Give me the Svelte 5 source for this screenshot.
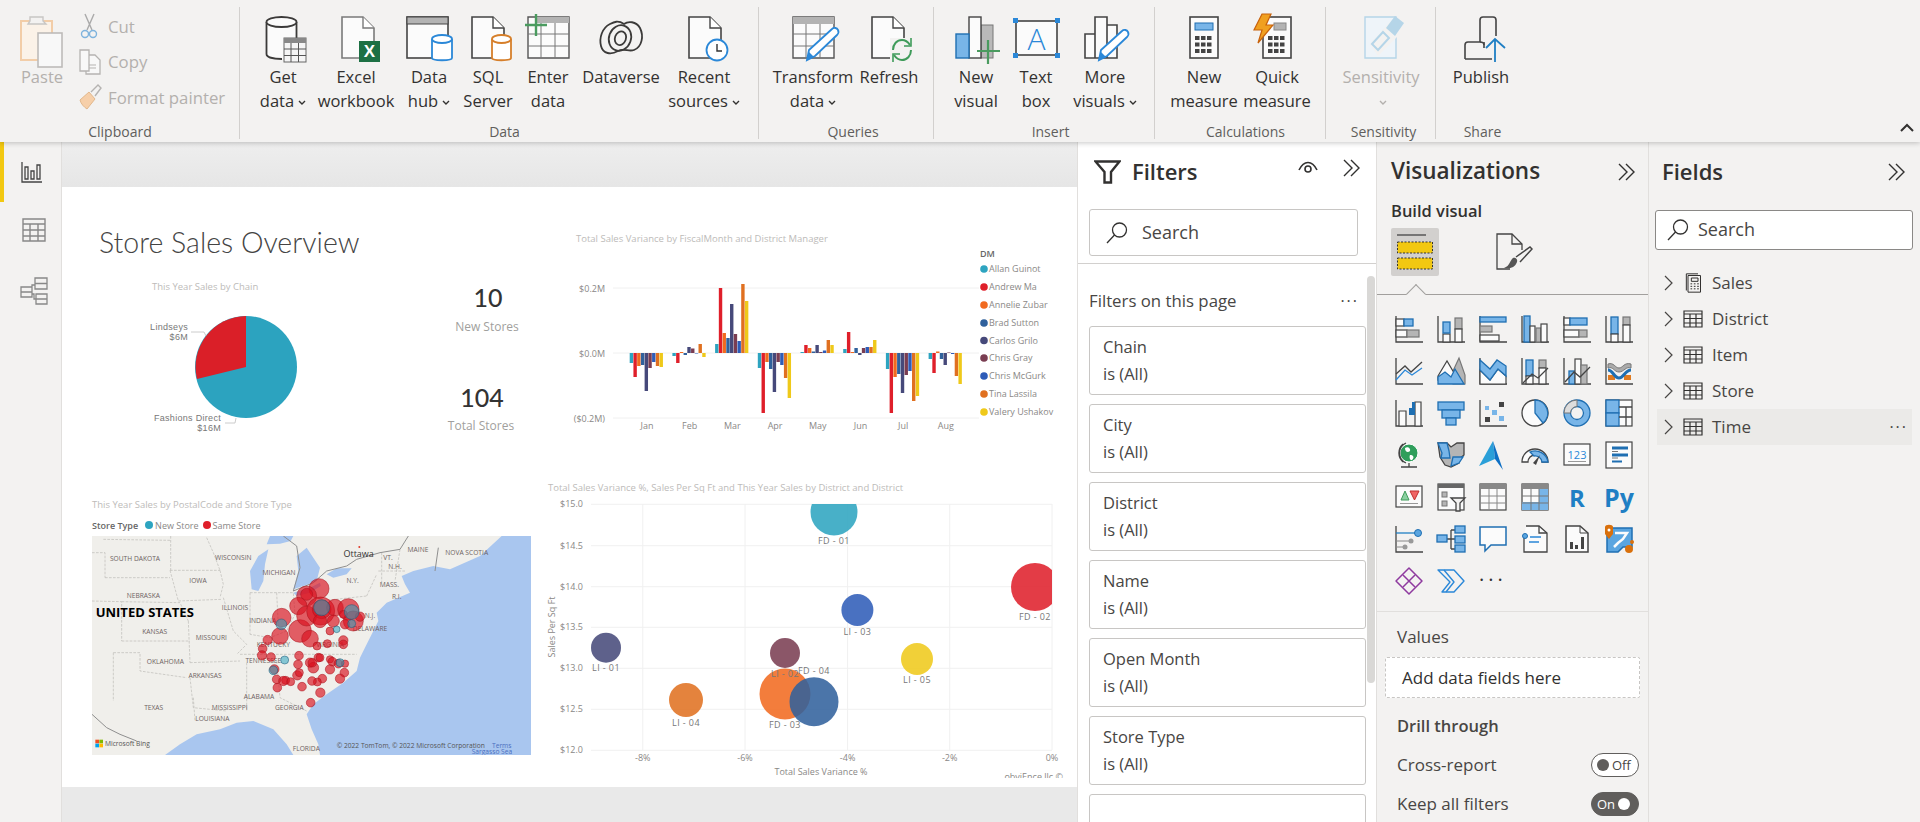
<script>
  const colors = ['#2da4c0', '#df1f2a', '#f16a1f', '#30619c', '#46497a', '#7a3d52', '#2e5cb8', '#e07020', '#efc91a'];
  const managers = ['Allan Guinot', 'Andrew Ma', 'Annelie Zubar', 'Brad Sutton', 'Carlos Grilo', 'Chris Gray', 'Chris McGurk', 'Tina Lassila', 'Valery Ushakov'];
  const legendY = [269, 287, 305, 323, 340.5, 358, 376, 394, 412];
  const months = [
    ['Jan', [-10, -24, -13, -12, -38, -15, -9, -13, -14]],
    ['Feb', [-3, -10, 1, -2, 6, 4.5, -0.5, 9, -4]],
    ['Mar', [9, 65, 20, 15, 49, 19, 12, 69, 52]],
    ['Apr', [-15, -60, -9, -16, -39, -9, -12, -25, -45]],
    ['May', [1, 8, 5, 1.5, 8, 1, 2.5, 13, 8]],
    ['Jun', [4, 21, 1, 5, -2, 5, 6, 6, 13]],
    ['Jul', [-16, -60, -24, -21, -40, -22, -18, -48, -43]],
    ['Aug', [-6, -20, 1.5, -6, -12, 0.5, -1, -23, -31]]
  ];

  const bubbles = [
    [834, 512, 23.5, '#2da4c0', 'FD - 01', 544],
    [1035, 587, 24, '#df1f2a', 'FD - 02', 620],
    [857.4, 610, 16, '#2e5cb8', 'LI - 03', 635],
    [606, 647.7, 15, '#46497a', 'LI - 01', 671],
    [785, 653, 15, '#7a3d52', 'LI - 02', 677],
    [917, 659, 16, '#efc91a', 'LI - 05', 683],
    [686, 700, 17, '#e07020', 'LI - 04', 726],
    [785, 694, 25.5, '#f16a1f', 'FD - 03', 728],
    [814, 701.7, 24.5, '#30619c', 'FD - 04', 674]
  ];
  const yTicks = [['$15.0', 504.3], ['$14.5', 545.7], ['$14.0', 586.7], ['$13.5', 627.3], ['$13.0', 668.3], ['$12.5', 709.3], ['$12.0', 750.3]];
  const xTicks = [['-8%', 642.8], ['-6%', 745], ['-4%', 847.6], ['-2%', 949.7], ['0%', 1052]];

  const mapLabels = [
    ['SOUTH DAKOTA', 165, 240], ['WISCONSIN', 460, 236], ['MICHIGAN', 597, 283], ['IOWA', 354, 307],
    ['NEBRASKA', 190, 350], ['ILLINOIS', 465, 388], ['INDIANA', 548, 425], ['KANSAS', 224, 458],
    ['MISSOURI', 394, 478], ['KENTUCKY', 580, 497], ['TENNESSEE', 550, 545], ['OKLAHOMA', 256, 549],
    ['ARKANSAS', 375, 592], ['ALABAMA', 537, 654], ['MISSISSIPPI', 449, 687], ['GEORGIA', 628, 687],
    ['TEXAS', 221, 687], ['LOUISIANA', 397, 720], ['FLORIDA', 679, 810], ['N.Y.', 818, 307],
    ['MASS.', 928, 317], ['VT.', 924, 236], ['N.H.', 945, 264], ['R.I.', 950, 354], ['MAINE', 1014, 212],
    ['NOVA SCOTIA', 1160, 221], ['N.J.', 870, 410], ['DELAWARE', 870, 450], ['VIRGINIA', 750, 497]
  ];
  const stateLines = [
    'M70 175 272 178', 'M272 165V268', 'M36 215H75V290', 'M75 290H270', 'M270 268H420', 'M270 268 295 360', 'M295 360 425 355',
    'M420 268 430 310 420 350', 'M36 360 125 362V480', 'M125 362 300 365 325 420', 'M125 480H330', 'M325 420 330 545',
    'M100 515H180V570L320 590', 'M100 515V660', 'M330 545 480 540', 'M330 590 340 680 440 690', 'M340 650 345 720',
    'M380 170 400 215 420 268', 'M430 350 460 450 500 490 470 520', 'M510 335V460', 'M590 335 595 435', 'M510 335H640L645 400 620 450 570 470 510 460',
    'M480 520H830', 'M500 545V690', 'M590 540 600 650 680 690', 'M720 360 860 345', 'M860 345 890 280', 'M895 270H975', 'M905 215V310', 'M960 205 945 300'
  ];
  const redDots = [
    [717, 323, 30], [680, 345, 30], [680, 340, 18], [655, 375, 26], [605, 410, 28], [600, 465, 25], [660, 450, 34], [690, 473, 25],
    [680, 405, 30], [722, 390, 42], [725, 385, 28], [765, 380, 25], [805, 385, 32], [720, 420, 20], [760, 420, 18], [820, 420, 30],
    [840, 407, 14], [790, 400, 12], [795, 430, 14], [750, 450, 12], [790, 478, 14], [790, 490, 13], [742, 488, 12], [711, 495, 12],
    [563, 477, 14], [548, 503, 13], [546, 523, 14], [573, 528, 13], [583, 565, 14], [590, 595, 13], [617, 598, 12], [610, 600, 14],
    [632, 602, 12], [592, 620, 13], [652, 583, 14], [658, 575, 12], [654, 550, 13], [657, 524, 13], [690, 545, 14], [700, 560, 16],
    [697, 545, 13], [715, 530, 13], [720, 530, 12], [750, 535, 11], [757, 542, 13], [775, 548, 13], [795, 548, 11], [750, 565, 14],
    [793, 575, 13], [780, 593, 14], [727, 593, 13], [712, 603, 12], [696, 600, 13], [666, 617, 13], [721, 635, 14], [692, 665, 13]
  ];
  const tealDots = [[604, 430, 16], [815, 393, 22], [815, 428, 12], [614, 537, 12], [580, 568, 13], [780, 545, 12], [725, 380, 24], [770, 445, 10]];

  const filters = ['Chain', 'City', 'District', 'Name', 'Open Month', 'Store Type'];
  const fields = ['District', 'Item', 'Store', 'Time'];
</script>

{#snippet doc(x, stroke)}
  <path d="M{x} 3H{x + 21}L{x + 32} 14V44H{x}Z" fill="#fbfbfb" stroke={stroke} stroke-width="1.6" />
  <path d="M{x + 21} 3V14H{x + 32}" fill="#fff" stroke={stroke} stroke-width="1.4" />
{/snippet}

{#snippet rbtn(width, lines, caret, icon, off)}
  <div class="rbtn" class:off style="width: {width}px">
    <svg class="ricon" viewBox="0 0 50 50">{@render icon()}</svg>
    <span>{lines[0]}</span>
    <span>{lines[1] ?? ''}{#if caret}<svg class="caret" viewBox="0 0 8 6"><path d="M1 1l3 3 3-3" /></svg>{/if}</span>
  </div>
{/snippet}

{#snippet chevrons()}
  <svg class="chev" viewBox="0 0 20 18"><path d="M2 1l8 8-8 8M9 1l8 8-8 8" /></svg>
{/snippet}

{#snippet lens()}
  <svg class="lens" viewBox="0 0 24 24"><circle cx="14.5" cy="9" r="7" /><path d="M9.5 14L2 22" /></svg>
{/snippet}

{#snippet tableIcon()}
  <svg class="ficon" viewBox="0 0 20 20"><path d="M1 2H19V18H1ZM1 5H19M1 9.5H19M1 14H19M7 5V18M13 5V18" /></svg>
{/snippet}

{#snippet getData()}
  <path d="M8.5 8V40C8.5 43 15 45 24 45H28V24H38.5V8Z" fill="#fbfbfb" />
  <path d="M8.5 8V40C8.5 43 15 45 24 45M38.5 8V24" fill="none" stroke="#3b3a39" stroke-width="1.8" />
  <ellipse cx="23.5" cy="8" rx="15" ry="5" fill="#fbfbfb" stroke="#3b3a39" stroke-width="1.8" />
  <rect x="26" y="24" width="22" height="24" fill="#f5f5f5" stroke="#666" />
  <rect x="26" y="24" width="22" height="5" fill="#888" />
  <path d="M26 35H48M26 41.5H48M33 29V48M40.5 29V48" stroke="#555" fill="none" />
{/snippet}
{#snippet excel()}
  {@render doc(11, '#7a7a7a')}
  <rect x="28" y="27" width="21" height="21" fill="#1d7044" />
  <text x="38.5" y="43" class="xl">X</text>
{/snippet}
{#snippet hub()}
  <rect x="3" y="3" width="41" height="41" fill="#fbfbfb" stroke="#444" stroke-width="1.6" />
  <rect x="3" y="3" width="41" height="7" fill="#b3b3b3" stroke="#444" stroke-width="1" />
  <path d="M28 25V44C28 47 48 47 48 44V25" fill="#fff" stroke="#2b88d8" stroke-width="1.8" />
  <ellipse cx="38" cy="25" rx="10" ry="4" fill="#fff" stroke="#2b88d8" stroke-width="1.8" />
{/snippet}
{#snippet sql()}
  {@render doc(9, '#444')}
  <path d="M29 25V44C29 47 48 47 48 44V25" fill="#fff" stroke="#d67f2a" stroke-width="1.8" />
  <ellipse cx="38.5" cy="25" rx="9.5" ry="4" fill="#fff" stroke="#d67f2a" stroke-width="1.8" />
{/snippet}
{#snippet enter()}
  <path d="M5 3H46V44H5Z" fill="#fbfbfb" stroke="#555" stroke-width="1.4" />
  <rect x="14" y="3" width="32" height="6" fill="#b3b3b3" />
  <path d="M5 20H46M5 32H46M18 9V44M32 9V44" stroke="#777" fill="none" />
  <path d="M13 0V22M2 11H24" stroke="#4a9b5f" stroke-width="2.4" fill="none" />
{/snippet}
{#snippet dataverse()}
  <g fill="none" stroke="#3b3a39" stroke-width="1.8">
    <path d="M14 10C6 14 3 24 5 32 7 40 15 41 22 37 28 34 33 38 38 36 46 33 48 22 44 14 40 7 32 7 28 10 22 6 18 8 14 10Z" />
    <ellipse cx="24" cy="24" rx="11" ry="13" transform="rotate(20 24 24)" />
    <ellipse cx="24.5" cy="24" rx="5.5" ry="7" transform="rotate(20 24 24)" />
  </g>
{/snippet}
{#snippet recent()}
  {@render doc(10, '#444')}
  <circle cx="38" cy="36" r="10.5" fill="#fff" stroke="#2b88d8" stroke-width="1.8" />
  <path d="M38 30V37H43" fill="none" stroke="#333" stroke-width="1.4" />
{/snippet}
{#snippet transform()}
  <path d="M5 3H46V44H5Z" fill="#fbfbfb" stroke="#555" stroke-width="1.4" />
  <rect x="5" y="3" width="41" height="7" fill="#b3b3b3" />
  <path d="M5 20H46M5 32H46M18 10V44M32 10V44" stroke="#777" fill="none" />
  <path d="M19 46 21 36 44 15C46 13 49 14 50 16 51 18 50 20 49 21L27 42Z" fill="#fff" stroke="#2b88d8" stroke-width="1.8" />
  <path d="M19 46 21 38 26 43Z" fill="#2b88d8" />
{/snippet}
{#snippet refresh()}
  {@render doc(8, '#444')}
  <rect x="26" y="24" width="24" height="24" fill="#f3f2f1" />
  <path d="M29 36C29 30 33 26 38 26 41 26 44 28 46 31M47 36C47 42 43 46 38 46 35 46 32 44 30 41" fill="none" stroke="#3f9b5a" stroke-width="2" />
  <path d="M47 24V32H40M29 48V40H36" fill="none" stroke="#3f9b5a" stroke-width="1.6" />
{/snippet}
{#snippet newVisual()}
  <rect x="30" y="11" width="12" height="33" fill="#b9b9b9" stroke="#777" />
  <rect x="18" y="3" width="12" height="41" fill="#fbfbfb" stroke="#444" stroke-width="1.4" />
  <rect x="5" y="20" width="13" height="24" fill="#78b5e8" stroke="#1f6fb2" stroke-width="1.4" />
  <path d="M37 26V50M26 37H49" stroke="#4a9b5f" stroke-width="2.2" fill="none" />
{/snippet}
{#snippet textBox()}
  <rect x="5" y="7" width="41" height="34" fill="#fbfbfb" stroke="#444" stroke-width="1.6" />
  <path d="M2 4h5v5H2zM44 4h5v5h-5zM2 39h5v5H2zM44 39h5v5h-5z" fill="#2b88d8" />
  <text x="25.5" y="36" class="abox">A</text>
{/snippet}
{#snippet moreVisuals()}
  <path d="M5 44V20H15V44ZM15 44V3H27V44ZM27 44V11H37V44Z" fill="#fbfbfb" stroke="#444" stroke-width="1.6" />
  <path d="M19 46 21 36 42 17C44 15 47 16 48 18 49 20 48 22 47 23L27 42Z" fill="#fff" stroke="#2b88d8" stroke-width="1.8" />
  <path d="M19 46 21 38 26 43Z" fill="#2b88d8" />
{/snippet}
{#snippet calcKeys(x)}
  {#each [22, 28.5, 35] as y}
    {#each [x + 4, x + 10, x + 16] as kx}
      <rect x={kx} {y} width="4.5" height="4" fill="#444" />
    {/each}
  {/each}
{/snippet}
{#snippet newMeasure()}
  <rect x="11" y="3" width="28" height="41" fill="#fbfbfb" stroke="#444" stroke-width="1.6" />
  <rect x="16" y="9" width="18" height="7" fill="#78b5e8" stroke="#1f6fb2" />
  {@render calcKeys(12)}
{/snippet}
{#snippet quickMeasure()}
  <rect x="11" y="3" width="28" height="41" fill="#fbfbfb" stroke="#444" stroke-width="1.6" />
  <rect x="22" y="9" width="12" height="7" fill="#b3b3b3" stroke="#888" />
  {@render calcKeys(12)}
  <path d="M10 0H19L14 11H21L6 29 10 16H2Z" fill="#f0a020" stroke="#c8620c" stroke-width="1.2" />
{/snippet}
{#snippet sensitivity()}
  <path d="M9 3H40V44H9Z" fill="#eef4f9" stroke="#b5d5e8" stroke-width="1.4" />
  <path d="M14 30 34 8 48 10 44 20 22 42Z" fill="#f3f2f1" />
  <path d="M16 30 27 18 33 24 22 36Z" fill="none" stroke="#b5d5e8" stroke-width="2" />
  <path d="M30 14 39 2 48 9 39 22Z" fill="#b5d5e8" />
{/snippet}
{#snippet publish()}
  <path d="M9 45V31C9 29 10 28 12 28H24V6C24 4 25 3 27 3H37C39 3 40 4 40 6V22M9 45H36M28 28V34" fill="none" stroke="#444" stroke-width="1.6" />
  <path d="M24 28C26 28 28 29 28 31" fill="none" stroke="#444" stroke-width="1.6" />
  <path d="M39 48V25M30 34 39 25 49 34" fill="none" stroke="#1f7fc4" stroke-width="1.8" />
{/snippet}

<div class="app">
  <header class="ribbon">
    <section class="group clip" style="width: 240px">
      <div class="btns">
        <div class="rbtn off" style="width: 60px">
          <svg class="ricon" viewBox="0 0 50 50">
            <rect x="4" y="7" width="31" height="39" fill="#fbf2e8" stroke="#f2cda8" stroke-width="2" />
            <path d="M13 7V3H26V7L29 10H11Z" fill="#f3f2f1" stroke="#c8c6c4" stroke-width="1.4" />
            <rect x="21" y="19" width="24" height="34" fill="#f8f8f8" stroke="#bdbbb9" stroke-width="1.6" />
          </svg>
          <span>Paste</span>
        </div>
        <div class="small">
          <div class="srow">
            <svg class="sicon" viewBox="0 0 24 26"><path d="M7 1l7 16M16 1L9 17" stroke="#aaa" stroke-width="1.4" fill="none" /><circle cx="7" cy="21" r="3.5" stroke="#7eb3dd" stroke-width="1.4" fill="none" /><circle cx="15" cy="21" r="3.5" stroke="#7eb3dd" stroke-width="1.4" fill="none" /></svg>
            Cut
          </div>
          <div class="srow">
            <svg class="sicon" viewBox="0 0 24 26"><path d="M2 1H11V22H2ZM11 6H17L22 11V25H8V22" fill="#f8f8f8" stroke="#b5b3b1" stroke-width="1.3" /><path d="M11 16H18M11 19H18" stroke="#b5b3b1" /></svg>
            Copy
          </div>
          <div class="srow">
            <svg class="sicon" viewBox="0 0 24 26"><path d="M2 16 11 8 17 15 9 25C6 23 3 20 2 16Z" fill="#f6cfa9" stroke="#e2b88c" /><path d="M13 8l7-7 3 3-6 8" fill="#f3f2f1" stroke="#b5b3b1" stroke-width="1.4" /></svg>
            Format painter
          </div>
        </div>
      </div>
      <div class="glabel">Clipboard</div>
    </section>

    <section class="group" style="width: 519px; padding-left: 10px">
      <div class="btns">
        {@render rbtn(66, ['Get', 'data'], true, getData)}
        {@render rbtn(80, ['Excel', 'workbook'], false, excel)}
        {@render rbtn(66, ['Data', 'hub'], true, hub)}
        {@render rbtn(52, ['SQL', 'Server'], false, sql)}
        {@render rbtn(68, ['Enter', 'data'], false, enter)}
        {@render rbtn(78, ['Dataverse'], false, dataverse)}
        {@render rbtn(88, ['Recent', 'sources'], true, recent)}
      </div>
      <div class="glabel">Data</div>
    </section>

    <section class="group" style="width: 175px; padding-left: 13px">
      <div class="btns">
        {@render rbtn(82, ['Transform', 'data'], true, transform)}
        {@render rbtn(70, ['Refresh'], false, refresh)}
      </div>
      <div class="glabel">Queries</div>
    </section>

    <section class="group" style="width: 221px; padding-left: 12px">
      <div class="btns">
        {@render rbtn(60, ['New', 'visual'], false, newVisual)}
        {@render rbtn(60, ['Text', 'box'], false, textBox)}
        {@render rbtn(78, ['More', 'visuals'], true, moreVisuals)}
      </div>
      <div class="glabel">Insert</div>
    </section>

    <section class="group" style="width: 171px; padding-left: 10px">
      <div class="btns">
        {@render rbtn(78, ['New', 'measure'], false, newMeasure)}
        {@render rbtn(68, ['Quick', 'measure'], false, quickMeasure)}
      </div>
      <div class="glabel">Calculations</div>
    </section>

    <section class="group" style="width: 110px; padding-left: 5px">
      <div class="btns">
        {@render rbtn(100, ['Sensitivity'], true, sensitivity, true)}
      </div>
      <div class="glabel">Sensitivity</div>
    </section>

    <section class="group last" style="width: 86px; padding-left: 7px">
      <div class="btns">
        {@render rbtn(76, ['Publish'], false, publish)}
      </div>
      <div class="glabel">Share</div>
    </section>

    <svg class="collapse" viewBox="0 0 14 9"><path d="M1 8l6-6 6 6" /></svg>
  </header>

  <div class="main">
    <nav class="rail">
      <div class="rail-item active">
        <svg viewBox="0 0 22 22" width="22" height="22"><path d="M1 1V21H21M4 18V6H7V18ZM10 18V10H13V18ZM16 18V4H19V18Z" fill="none" stroke="#444" stroke-width="1.3" /></svg>
      </div>
      <div class="rail-item">
        <svg viewBox="0 0 24 24" width="24" height="24"><path d="M1 1H23V23H1ZM1 6H23M1 12H23M1 18H23M8 6V23M16 6V23" fill="none" stroke="#888" stroke-width="1.4" /></svg>
      </div>
      <div class="rail-item">
        <svg viewBox="0 0 28 28" width="28" height="28"><path d="M15 1H27V12H15ZM15 6.5H27M1 10H12V20H1ZM1 15H12M16 17H27V27H16ZM16 22H27M12 12V8H15M12 17H14V22H16" fill="none" stroke="#888" stroke-width="1.3" /></svg>
      </div>
    </nav>

    <main class="canvas">
      <div class="page">
        <svg class="cell" width="478" height="292" viewBox="62 187 478 292">
          <text x="99" y="253" class="ptitle">Store Sales Overview</text>
          <text x="152" y="290" class="vtitle">This Year Sales by Chain</text>
          <circle cx="246" cy="367" r="51" fill="#2ca3bf" />
          <path d="M246 367V316A51 51 0 0 0 197 379Z" fill="#da1f28" />
          <path d="M191 332H204L206 336M225 423H235L236 418" fill="none" stroke="#ccc" />
          <text x="188" y="330" class="plabel end">Lindseys</text>
          <text x="188" y="339.5" class="plabel end">$6M</text>
          <text x="221" y="421" class="plabel end">Fashions Direct</text>
          <text x="221" y="431" class="plabel end">$16M</text>
          <text x="488" y="307" class="cardnum mid">10</text>
          <text x="487" y="331" class="cardlab mid">New Stores</text>
          <text x="482" y="407" class="cardnum mid">104</text>
          <text x="481" y="430" class="cardlab mid">Total Stores</text>
        </svg>

        <svg class="cell" width="537" height="292" viewBox="540 187 537 292">
          <text x="576" y="242" class="vtitle">Total Sales Variance by FiscalMonth and District Manager</text>
          {#each [[288, '$0.2M'], [353, '$0.0M'], [418, '($0.2M)']] as [y, label]}
            <line x1="613" x2="979" y1={y} y2={y} class="grid" />
            <text x="605" y={y + 3.5} class="axis end">{label}</text>
          {/each}
          {#each months as [name, values], m}
            {#each values as v, b}
              <rect x={629.7 + m * 42.7 + b * 3.73} y={v > 0 ? 353 - v : 353} width="3.4" height={Math.abs(v)} fill={colors[b]} />
            {/each}
            <text x={647 + m * 42.7} y="429" class="axis mid">{name}</text>
          {/each}
          <text x="980" y="257" class="axis strong">DM</text>
          {#each managers as name, i}
            <circle cx="984" cy={legendY[i]} r="3.8" fill={colors[i]} />
            <text x="989" y={legendY[i] + 3} class="axis">{name}</text>
          {/each}
        </svg>

        <div class="mapcell">
          <div class="vtitle-html">This Year Sales by PostalCode and Store Type</div>
          <div class="maplegend">
            <b>Store Type</b>
            <i style="background: #2da4c0"></i><span>New Store</span>
            <i style="background: #df1f2a"></i><span>Same Store</span>
          </div>
          <svg class="map" width="439" height="219" viewBox="36 165 1317 657">
            <rect x="36" y="165" width="1317" height="657" fill="#f0efeb" />
            <g fill="#a9c6ef">
              <path d="M1265 165H1353V822H720L715 790 695 745 680 700 700 670 740 640 790 605 830 570 840 530 860 490 880 450 895 420 890 395 920 365 990 335 975 310 965 285 1000 270 1060 255 1110 265 1200 225Z" />
              <path d="M255 822 300 790 350 760 420 745 470 725 520 720 580 745 620 790 640 822Z" />
              <path d="M570 165H640L632 180 600 188 560 190Z" />
              <path d="M515 325 510 270 535 225 565 205 555 250 550 300 535 330Z" />
              <path d="M650 225 680 200 720 260 710 300 670 315 640 325 655 270Z" />
              <path d="M640 335 690 320 720 305 722 315 690 335 650 345Z" />
              <path d="M740 280 770 262 815 262 800 280 760 290Z" />
            </g>
            <g class="states">
              {#each stateLines as d}
                <path {d} />
              {/each}
            </g>
            <g class="border">
              <path d="M610 165 650 195 660 260 640 330 700 305 740 270 800 255 830 235 900 215 960 205 985 165" />
              <path d="M1075 200 1065 270" />
              <path d="M36 700 80 740 120 760 170 780" />
            </g>
            {#each mapLabels as [label, x, y]}
              <text {x} {y} class="mlabel">{label}</text>
            {/each}
            <text x="836" y="227" class="mcity">Ottawa</text>
            <circle cx="838" cy="198" r="3" fill="#e03a2a" />
            <text x="47" y="407" class="mcountry">UNITED STATES</text>
            {#each redDots as [cx, cy, r]}
              <circle {cx} {cy} {r} class="dot red" />
            {/each}
            {#each tealDots as [cx, cy, r]}
              <circle {cx} {cy} {r} class="dot teal" />
            {/each}
            <path d="M46 776h11v11H46z" fill="#f25022" /><path d="M58 776h11v11H58z" fill="#7fba00" />
            <path d="M46 788h11v11H46z" fill="#00a4ef" /><path d="M58 788h11v11H58z" fill="#ffb900" />
            <text x="75" y="795" class="mcopy">Microsoft Bing</text>
            <text x="770" y="802" class="mcopy">© 2022 TomTom, © 2022 Microsoft Corporation</text>
            <text x="1236" y="802" class="mcopy blue">Terms</text>
            <text x="1175" y="819" class="mcopy blue">Sargasso Sea</text>
          </svg>
        </div>

        <svg class="cell" width="537" height="308" viewBox="540 479 537 308">
          <defs>
            <clipPath id="plot"><rect x="591" y="504" width="461" height="246" /></clipPath>
            <clipPath id="cut"><rect x="950" y="765" width="120" height="13" /></clipPath>
          </defs>
          <text x="548" y="491" class="vtitle">Total Sales Variance %, Sales Per Sq Ft and This Year Sales by District and District</text>
          {#each yTicks as [label, y]}
            <line x1="591" x2="1052" y1={y} y2={y} class="grid" />
            <text x="583" y={y + 3} class="axis end">{label}</text>
          {/each}
          {#each xTicks as [label, x]}
            <line x1={x} x2={x} y1="504" y2="750" class="grid" />
            <text {x} y="761" class="axis mid">{label}</text>
          {/each}
          <g clip-path="url(#plot)">
            {#each bubbles as [cx, cy, r, fill]}
              <circle {cx} {cy} {r} {fill} opacity="0.87" />
            {/each}
          </g>
          {#each bubbles as [cx, , , , label, y]}
            <text x={cx} {y} class="axis mid spaced">{label}</text>
          {/each}
          <text x="821" y="775" class="axis mid">Total Sales Variance %</text>
          <text x="0" y="0" class="axis mid" transform="translate(555 627) rotate(-90)">Sales Per Sq Ft</text>
          <text x="1063" y="780" class="axis end" clip-path="url(#cut)">obviEnce llc ©</text>
        </svg>
      </div>
    </main>

    <aside class="filters">
      <div class="phead">
        <svg class="funnel" viewBox="0 0 27 24"><path d="M1.5 1.5H25.5L17 12V22.5H10.5V12Z" /></svg>
        <h2>Filters</h2>
        <svg class="eye" viewBox="0 0 20 14"><path d="M1 9C4 3 7 1.5 10 1.5S16 3 19 9" /><circle cx="10" cy="8" r="3" /></svg>
        {@render chevrons()}
      </div>
      <div class="searchwrap">
        <div class="search">{@render lens()}<span>Search</span></div>
      </div>
      <div class="flist">
        <div class="ftitle"><span>Filters on this page</span><span class="dots">···</span></div>
        {#each filters as name}
          <div class="fcard">{name}<br />is (All)</div>
        {/each}
        <div class="fcard"></div>
      </div>
      <div class="scroll"></div>
    </aside>

    <aside class="viz">
      <div class="phead"><h2>Visualizations</h2>{@render chevrons()}</div>
      <div class="build">Build visual</div>
      <div class="tabs">
        <div class="tab">
          <svg viewBox="0 0 38 38" width="38" height="38">
            <path d="M1 2H30" stroke="#444" stroke-width="1.3" />
            <rect x="1.5" y="9" width="35" height="11" fill="#f2c811" stroke="#333" stroke-dasharray="2 1.5" />
            <rect x="1.5" y="25" width="35" height="11" fill="#f2c811" stroke="#333" stroke-dasharray="2 1.5" />
          </svg>
        </div>
        <svg class="fmt" viewBox="0 0 38 38" width="38" height="38">
          <path d="M15 36H2V1H17L27 11V17" fill="none" stroke="#444" stroke-width="1.3" />
          <path d="M17 1V11H27" fill="none" stroke="#444" stroke-width="1.3" />
          <path d="M9 35C14 36 20 35 22 29 23 26 20 24 18 25 15 27 15 33 9 35Z" fill="#555" />
          <path d="M21 24 35 14 37 16 25 29" fill="none" stroke="#444" stroke-width="1.5" />
        </svg>
      </div>

      <div class="vizgrid">
        <svg viewBox="0 0 28 28"><path class="k" d="M1 1V27H28" /><rect class="w" x="1" y="4" width="8" height="7" /><rect class="b" x="9" y="4" width="9" height="7" /><rect class="w" x="1" y="15" width="11" height="7" /><rect class="g" x="12" y="15" width="12" height="7" /></svg>
        <svg viewBox="0 0 28 28"><path class="k" d="M1 1V27H28" /><rect class="w" x="6" y="19" width="7" height="8" /><rect class="b" x="6" y="7" width="7" height="11" /><rect class="g" x="18" y="3" width="7" height="11" /><rect class="w" x="18" y="14" width="7" height="13" /></svg>
        <svg viewBox="0 0 28 28"><path class="k" d="M1 1V27H28" /><rect class="b" x="1" y="2" width="26" height="5" /><rect class="g" x="1" y="11" width="12" height="6" /><rect class="w" x="1" y="20" width="19" height="6" /></svg>
        <svg viewBox="0 0 28 28"><path class="k" d="M1 1V27H28" /><rect class="b" x="3" y="1" width="6" height="26" /><rect class="w" x="9" y="11" width="5" height="16" /><rect class="g" x="15" y="13" width="5" height="14" /><rect class="w" x="20" y="9" width="6" height="18" /></svg>
        <svg viewBox="0 0 28 28"><path class="k" d="M1 1V27H28" /><rect class="w" x="1" y="3" width="6" height="7" /><rect class="b" x="7" y="3" width="17" height="7" /><rect class="w" x="1" y="15" width="15" height="7" /><rect class="g" x="16" y="15" width="8" height="7" /></svg>
        <svg viewBox="0 0 28 28"><path class="k" d="M1 1V27H28" /><rect class="b" x="6" y="2" width="7" height="17" /><rect class="w" x="6" y="19" width="7" height="8" /><rect class="g" x="18" y="2" width="7" height="8" /><rect class="w" x="18" y="10" width="7" height="17" /></svg>

        <svg viewBox="0 0 28 28"><path class="k" d="M1 1V27H28" /><path class="k" d="M1 17 10 9 16 15 27 5" /><path class="kb" d="M1 23 10 13 17 18 27 11" /></svg>
        <svg viewBox="0 0 28 28"><path class="g" d="M16 14 22 1 28 18V27H16Z" /><path class="w" d="M1 19 10 4 20 21 1 23Z" /><path class="b" d="M1 27V20L8 15 14 20 18 12 27 27Z" /></svg>
        <svg viewBox="0 0 28 28"><path class="k" d="M1 1V27H28" /><path class="w" d="M1 13 11 23 19 12 27 19V27H1Z" /><path class="b" d="M1 3 11 12 18 3 27 9V19L19 12 11 23 1 13Z" /></svg>
        <svg viewBox="0 0 28 28"><path class="k" d="M1 1V27H28" /><rect class="b" x="5" y="3" width="7" height="16" /><rect class="w" x="5" y="19" width="7" height="8" /><rect class="g" x="18" y="3" width="7" height="8" /><rect class="w" x="18" y="11" width="7" height="16" /><path class="k" d="M2 26 11 17 17 21 27 11" /></svg>
        <svg viewBox="0 0 28 28"><path class="k" d="M1 1V27H28" /><rect class="b" x="6" y="14" width="6" height="13" /><rect class="w" x="12" y="2" width="6" height="25" /><rect class="g" x="18" y="8" width="6" height="19" /><path class="k" d="M2 25 11 15 17 20 27 10" /></svg>
        <svg viewBox="0 0 28 28"><path class="k" d="M1 1V27H28" /><path d="M3 7C9 5 10 11 14 11S19 5 26 7V11C21 9 19 15 14 15S8 9 3 11Z" fill="#aaa" stroke="#777" /><rect x="3" y="18" width="7" height="5" fill="#e07a1f" /><rect x="19" y="18" width="7" height="5" fill="#e07a1f" /><path d="M3 13C8 13 9 21 14 21S20 13 26 13" fill="none" stroke="#1f6fb2" stroke-width="3" /></svg>

        <svg viewBox="0 0 28 28"><path class="k" d="M1 1V27H28" /><path class="w" d="M4 27V12H11V27ZM20 27V3H26V27Z" /><path d="M14 16H20V3H17V9H14Z" fill="#1f6fb2" /></svg>
        <svg viewBox="0 0 28 28"><rect class="b" x="1" y="3" width="26" height="8" /><rect class="b" x="5" y="11" width="18" height="8" /><rect class="b" x="9" y="19" width="10" height="7" /></svg>
        <svg viewBox="0 0 28 28"><path class="k" d="M1 1V27H28" /><rect x="6" y="7" width="4" height="4" fill="#78b5e8" /><rect x="20" y="3" width="5" height="5" fill="#444" /><rect x="13" y="11" width="5" height="5" fill="#78b5e8" /><rect x="6" y="18" width="5" height="5" fill="#444" /><rect x="20" y="17" width="5" height="5" fill="#78b5e8" /></svg>
        <svg viewBox="0 0 28 28"><circle cx="14" cy="14" r="13" fill="#fbfbfb" stroke="#444" stroke-width="1.3" /><path d="M14 14V1A13 13 0 0 1 22 24Z" fill="#78b5e8" stroke="#1f6fb2" stroke-width="1.3" /></svg>
        <svg viewBox="0 0 28 28"><circle cx="14" cy="14" r="10" fill="none" stroke="#78b5e8" stroke-width="6" /><circle cx="14" cy="14" r="13" fill="none" stroke="#1f6fb2" stroke-width="1.3" /><circle cx="14" cy="14" r="6.5" fill="none" stroke="#1f6fb2" stroke-width="1.3" /><path d="M14 1A13 13 0 0 0 1 14H7.5A6.5 6.5 0 0 1 14 7.5Z" fill="#ddd" stroke="#777" /></svg>
        <svg viewBox="0 0 28 28"><rect class="w" x="1" y="1" width="26" height="26" /><rect class="b" x="1" y="1" width="13" height="13" /><rect class="b" x="1" y="14" width="13" height="13" /><path class="k" d="M14 8H27M21 8V27M14 18H27" /></svg>

        <svg viewBox="0 0 28 28"><circle cx="14" cy="12" r="9" fill="#2f9e5b" stroke="#fff" /><path d="M10 7c3-2 6 1 5 3-2 2-5 1-5-3ZM15 14c3 0 5 2 2 5-2 1-3-3-2-5Z" fill="#fff" /><path class="k" d="M6 26H22M14 22V26M8 3A12 12 0 0 0 8 21M11 2A11 11 0 0 0 11 22" stroke-width="1.5" /></svg>
        <svg viewBox="0 0 28 28"><path d="M1 2H10L14 6 20 2 27 2V14L22 18V22L14 26 8 24 3 16Z" fill="#b5b5b5" stroke="#444" stroke-width="1.3" /><path class="b" d="M1 2H10L12 10 13 17H4L5 12Z" /><path class="b" d="M16 16H26L22 22 14 25Z" /></svg>
        <svg viewBox="0 0 28 28"><path d="M14 0 0 25 16 18Z" fill="#2a9fd8" /><path d="M14 0 16 18 24 29Z" fill="#0d6fc4" /></svg>
        <svg viewBox="0 0 28 28"><path d="M1 21A13 13 0 0 1 27 21H21A7 7 0 0 0 7 21Z" fill="#fbfbfb" stroke="#444" stroke-width="1.3" /><path d="M9 11A13 13 0 0 1 27 21H21A7 7 0 0 0 13 15Z" fill="#78b5e8" stroke="#1f6fb2" stroke-width="1.3" /><path d="M12 22 19 14 15 24Z" fill="#444" /></svg>
        <svg viewBox="0 0 28 28"><rect class="w" x="1" y="3" width="26" height="21" stroke-width="1.8" /><text x="14" y="17.5" class="num">123</text><path d="M5 20.5H23" stroke="#999" /></svg>
        <svg viewBox="0 0 28 28"><rect class="w" x="1" y="1" width="26" height="26" stroke-width="1.8" /><path d="M7 7H23" stroke="#1f6fb2" stroke-width="3" /><path d="M7 10.5H13M7 17H13" stroke="#777" /><path d="M7 14H23" stroke="#1f6fb2" stroke-width="3" /><path d="M7 20.5H17" stroke="#1f6fb2" stroke-width="2" /></svg>

        <svg viewBox="0 0 28 28"><rect class="w" x="1" y="3" width="26" height="21" stroke-width="1.8" /><path d="M6 17 10 8 14 17Z" fill="#8ad0a0" stroke="#3f9b5a" /><path d="M15 8H24L19.5 17Z" fill="#f06565" stroke="#c03030" /><path d="M5 20.5H23" stroke="#999" /></svg>
        <svg viewBox="0 0 28 28"><rect class="w" x="1" y="1" width="26" height="26" stroke-width="1.8" /><rect x="1" y="1" width="26" height="4" fill="#666" /><rect x="5" y="9" width="5" height="5" fill="#b5b5b5" stroke="#777" /><rect x="5" y="18" width="5" height="5" fill="#b5b5b5" stroke="#777" /><path d="M14 15H28L23 20V28H19V20Z" fill="#f3f2f1" stroke="#444" stroke-width="1.3" /></svg>
        <svg viewBox="0 0 28 28"><rect class="w" x="1" y="1" width="26" height="26" stroke-width="1.8" /><rect x="1" y="1" width="26" height="5" fill="#888" /><path d="M1 13H27M1 20H27M10 6V27M18 6V27" stroke="#888" /></svg>
        <svg viewBox="0 0 28 28"><rect class="w" x="1" y="1" width="26" height="26" stroke-width="1.8" /><rect x="1" y="1" width="26" height="5" fill="#888" /><rect x="18" y="6" width="9" height="21" fill="#78b5e8" /><rect x="1" y="19" width="26" height="8" fill="#78b5e8" /><path d="M1 13H27M1 20H27M10 6V27M18 6V27" stroke="#777" /></svg>
        <div class="lang"><span class="r">R</span></div>
        <div class="lang"><span class="py">Py</span></div>

        <svg viewBox="0 0 28 28"><path class="k" d="M1 1V27H28" /><path d="M1 8H20" stroke="#1f7fc4" stroke-width="1.3" /><circle cx="23" cy="8" r="3.5" fill="#5aa5e0" stroke="#1f6fb2" /><path d="M1 16H14M1 22H8" stroke="#888" /><circle cx="16" cy="16" r="2.5" fill="#999" /><circle cx="10" cy="22" r="2.5" fill="#999" /></svg>
        <svg viewBox="0 0 28 28"><path class="k" d="M10 14H14M14 5V24M14 5H18M14 14H18M14 24H18" stroke="#1f6fb2" /><rect class="b" x="0" y="10" width="10" height="7" /><rect class="b" x="18" y="1" width="10" height="7" /><rect class="b" x="18" y="11" width="10" height="7" /><rect class="b" x="18" y="20" width="10" height="7" /></svg>
        <svg viewBox="0 0 28 28"><path d="M1 2H27V20H12L6 26V20H1Z" fill="#fbfbfb" stroke="#1f6fb2" stroke-width="1.5" /></svg>
        <svg viewBox="0 0 28 28"><path d="M5 1H18L26 8V27H3V12" fill="#fbfbfb" stroke="#444" stroke-width="1.3" /><path d="M18 1V8H26" fill="none" stroke="#444" stroke-width="1.3" /><circle cx="4" cy="11" r="2.5" fill="#5aa5e0" stroke="#1f6fb2" /><path d="M9 12H20M8 17H18" stroke="#2b88d8" stroke-width="1.3" /></svg>
        <svg viewBox="0 0 28 28"><path d="M3 1H17L25 8V27H3Z" fill="#fbfbfb" stroke="#444" stroke-width="1.5" /><path d="M17 1V8H25" fill="none" stroke="#444" /><path d="M7 24V17H10V24ZM12 24V20H15V24ZM18 24V12H21V24Z" fill="#444" /></svg>
        <svg viewBox="0 0 28 28"><path d="M3 3H27V22H18L13 27H2V10" fill="#5aa5e0" stroke="#1f6fb2" stroke-width="1.5" /><path d="M10 8H22L18 14 13 18 9 22" fill="none" stroke="#fbfbfb" stroke-width="2.5" /><path d="M0 2C0-1 8-1 8 2V9L4 14 0 9Z" fill="#d9700c" /><circle cx="4" cy="5" r="1.5" fill="#fff" /><circle cx="24" cy="24" r="4" fill="#d9700c" /><circle cx="27" cy="17" r="2" fill="#d9700c" /></svg>

        <svg viewBox="0 0 28 28"><g fill="none" stroke="#8e3a9f" stroke-width="1.5"><path d="M14 1 27 14 14 27 1 14Z" stroke-linejoin="round" /><path d="M8 8 20 20M20 8 8 20" /></g></svg>
        <svg viewBox="0 0 28 28"><g fill="none" stroke="#2b88d8" stroke-width="1.4" stroke-linejoin="round"><path d="M1 3H17L27 14 17 25H5L13 15Z" /><path d="M9 25 17 15 7 3" /></g></svg>
        <div class="lang"><span class="vdots">···</span></div>
      </div>

      <div class="wells">
        <div class="wlabel">Values</div>
        <div class="drop">Add data fields here</div>
        <div class="drill">Drill through</div>
        <div class="trow"><span>Cross-report</span><div class="toggle"><i></i>Off</div></div>
        <div class="trow"><span>Keep all filters</span><div class="toggle on">On<i></i></div></div>
      </div>
    </aside>

    <aside class="fields">
      <div class="phead"><h2>Fields</h2>{@render chevrons()}</div>
      <div class="search fsearch">{@render lens()}<span>Search</span></div>
      <div class="tree">
        <div class="trow2">
          <svg class="tchev" viewBox="0 0 10 16"><path d="M1 1l7 7-7 7" /></svg>
          <svg class="ficon" viewBox="0 0 20 24"><path d="M4 3H19V23H4ZM2 21V1H16M8 6H16V10H8Z" /><path d="M7 13h2M11 13h2M15 13h2M7 16h2M11 16h2M15 16h2M7 19h2M11 19h2M15 19h2" /></svg>
          <span class="tname">Sales</span>
        </div>
        {#each fields as name}
          <div class="trow2" class:hover={name === 'Time'}>
            <svg class="tchev" viewBox="0 0 10 16"><path d="M1 1l7 7-7 7" /></svg>
            {@render tableIcon()}
            <span class="tname">{name}</span>
            {#if name === 'Time'}<span class="dots end">···</span>{/if}
          </div>
        {/each}
      </div>
    </aside>
  </div>
</div>

<style>
  :global(body) {
    margin: 0;
    background: #f3f2f1;
  }

  .app {
    display: flex;
    flex-direction: column;
    width: 1920px;
    height: 822px;
    overflow: hidden;
    font-family: "Open Sans", sans-serif;
    color: #323130;
  }

  /* ribbon */
  .ribbon {
    position: relative;
    z-index: 2;
    display: flex;
    flex: none;
    height: 142px;
    background: #f3f2f1;
    box-shadow: 0 1px 5px rgba(0, 0, 0, 0.22);
  }
  .group {
    position: relative;
    display: flex;
    flex-direction: column;
    flex: none;
    box-sizing: border-box;
  }
  .group::after {
    content: "";
    position: absolute;
    top: 7px;
    bottom: 3px;
    right: 0;
    width: 1px;
    background: #d2d0ce;
  }
  .group.last::after {
    display: none;
  }
  .btns {
    display: flex;
    flex: 1;
    padding-top: 14px;
  }
  .clip .btns {
    padding-left: 12px;
  }
  .glabel {
    height: 20px;
    line-height: 20px;
    text-align: center;
    font-size: 14px;
    color: #605e5c;
  }
  .rbtn {
    display: flex;
    flex-direction: column;
    align-items: center;
    flex: none;
    padding-top: 1px;
    font-size: 16.5px;
    line-height: 24px;
    white-space: nowrap;
  }
  .rbtn span {
    height: 24px;
  }
  .rbtn.off {
    color: #b3b0ad;
  }
  .ricon {
    width: 50px;
    height: 50px;
    flex: none;
    margin-top: -1px;
    margin-bottom: 1px;
    overflow: visible;
  }
  .caret {
    width: 8px;
    height: 6px;
    margin-left: 4px;
    vertical-align: 1px;
  }
  .caret path {
    fill: none;
    stroke: currentColor;
    stroke-width: 1.4;
  }
  .small {
    display: flex;
    flex-direction: column;
    gap: 11.5px;
    margin-left: 6px;
    font-size: 16.8px;
    color: #b3b0ad;
  }
  .srow {
    display: flex;
    align-items: center;
    gap: 6px;
    height: 24px;
    white-space: nowrap;
  }
  .sicon {
    width: 24px;
    height: 26px;
    flex: none;
  }
  .xl {
    font-family: "Liberation Sans", sans-serif;
    font-size: 17px;
    font-weight: 700;
    fill: #fff;
    text-anchor: middle;
  }
  .abox {
    font-family: "Open Sans", sans-serif;
    font-size: 30px;
    font-weight: 300;
    fill: #2b88d8;
    text-anchor: middle;
  }
  .collapse {
    position: absolute;
    right: 6px;
    bottom: 10px;
    width: 14px;
    height: 9px;
  }
  .collapse path {
    fill: none;
    stroke: #323130;
    stroke-width: 2;
  }

  /* body */
  .main {
    display: flex;
    flex: 1;
    min-height: 0;
  }
  .rail {
    display: flex;
    flex-direction: column;
    flex: none;
    box-sizing: border-box;
    width: 62px;
    background: #f3f2f1;
    border-right: 1px solid #e1dfdd;
  }
  .rail-item {
    display: flex;
    align-items: center;
    justify-content: center;
    height: 60px;
    margin-left: 2px;
    border-left: 4px solid transparent;
  }
  .rail-item:nth-child(2) {
    height: 56px;
  }
  .rail-item:nth-child(3) {
    height: 66px;
  }
  .rail-item.active {
    margin-left: 0;
    border-left: 4px solid #f2c811;
    padding-right: 2px;
  }
  .canvas {
    flex: none;
    width: 1015px;
    padding-top: 45px;
    background: linear-gradient(#eeeeee 0, #e6e6e6 45px, #e9e9e9 46px);
  }
  .page {
    display: grid;
    grid-template-columns: 478px 537px;
    grid-template-rows: 292px 308px;
    height: 600px;
    background: #fff;
  }
  .cell {
    display: block;
  }
  .ptitle {
    font-family: "Lato", sans-serif;
    font-size: 28.5px;
    font-weight: 300;
    fill: #444;
  }
  .vtitle {
    font-size: 9.5px;
    fill: #bdbbb9;
  }
  .plabel {
    font-family: "Liberation Sans", sans-serif;
    font-size: 9px;
    letter-spacing: 0.3px;
    fill: #777;
  }
  .cardnum {
    font-family: "Lato", sans-serif;
    font-size: 25px;
    font-weight: 500;
    fill: #333;
  }
  .cardlab {
    font-size: 12px;
    fill: #a19f9d;
  }
  .axis {
    font-size: 9px;
    fill: #8a8886;
  }
  .strong {
    font-weight: 600;
    fill: #666;
  }
  .spaced {
    letter-spacing: 0.4px;
    fill: #777;
  }
  .end {
    text-anchor: end;
  }
  .mid {
    text-anchor: middle;
  }
  .grid {
    stroke: #f0f0f0;
    stroke-width: 1;
  }

  .mapcell {
    padding-top: 19px;
    padding-left: 30px;
    box-sizing: border-box;
  }
  .vtitle-html {
    height: 13px;
    line-height: 13px;
    font-size: 9.5px;
    color: #bdbbb9;
  }
  .maplegend {
    display: flex;
    align-items: center;
    height: 22px;
    margin-top: 3px;
    font-size: 9px;
    color: #8a8886;
  }
  .maplegend b {
    margin-right: 7px;
    font-weight: 600;
    color: #666;
  }
  .maplegend i {
    width: 8px;
    height: 8px;
    margin-right: 2px;
    border-radius: 50%;
  }
  .maplegend span {
    margin-right: 4px;
  }
  .map {
    display: block;
  }
  .states path {
    fill: none;
    stroke: #bbbab5;
    stroke-width: 2;
    stroke-dasharray: 8 4;
  }
  .border path {
    fill: none;
    stroke: #8f8f8f;
    stroke-width: 3;
  }
  .mlabel {
    font-size: 20px;
    fill: #6d5f5f;
    text-anchor: middle;
  }
  .mcity {
    font-size: 27px;
    fill: #333;
    text-anchor: middle;
  }
  .mcountry {
    font-size: 39px;
    font-weight: 700;
    fill: #000;
  }
  .mcopy {
    font-size: 20px;
    fill: #555;
  }
  .mcopy.blue {
    fill: #4a6fc0;
  }
  .dot {
    stroke-width: 2;
  }
  .red {
    fill: rgba(217, 17, 31, 0.66);
    stroke: rgba(170, 20, 30, 0.8);
  }
  .teal {
    fill: rgba(45, 164, 192, 0.55);
    stroke: rgba(30, 90, 120, 0.8);
  }

  /* side panels */
  .filters,
  .viz,
  .fields {
    position: relative;
    flex: none;
    box-sizing: border-box;
  }
  .phead {
    display: flex;
    align-items: center;
    height: 30px;
    margin-top: 15px;
  }
  h2 {
    flex: 1;
    margin: -2px 0 0;
    font-size: 22px;
    font-weight: 600;
    line-height: 30px;
    white-space: nowrap;
  }
  .chev {
    width: 20px;
    height: 18px;
    flex: none;
  }
  .chev path {
    fill: none;
    stroke: #323130;
    stroke-width: 1.4;
  }
  .search {
    display: flex;
    align-items: center;
    gap: 13px;
    box-sizing: border-box;
    height: 47px;
    padding-left: 15px;
    background: #fff;
    border: 1px solid #c8c6c4;
    border-radius: 3px;
    font-size: 18px;
    color: #484644;
  }
  .search span {
    margin-top: -2px;
  }
  .lens {
    width: 24px;
    height: 24px;
    flex: none;
  }
  .lens circle,
  .lens path {
    fill: none;
    stroke: #323130;
    stroke-width: 1.3;
  }

  .filters {
    width: 300px;
    background: #fff;
    border-left: 1px solid #e1dfdd;
    border-right: 1px solid #e1dfdd;
    overflow: hidden;
  }
  .filters .phead {
    padding: 0 14px 0 16px;
  }
  .filters h2 {
    margin-left: 11px;
  }
  .funnel {
    width: 27px;
    height: 24px;
  }
  .funnel path {
    fill: none;
    stroke: #323130;
    stroke-width: 2.4;
  }
  .eye {
    width: 20px;
    height: 14px;
    margin: 0 24px 8px 0;
  }
  .eye path,
  .eye circle {
    fill: none;
    stroke: #323130;
    stroke-width: 1.6;
  }
  .filters .chev {
    margin-bottom: 8px;
  }
  .searchwrap {
    margin-top: 22px;
    padding: 0 18px 7px 11px;
    border-bottom: 1px solid #d2d0ce;
  }
  .flist {
    padding: 26px 11px 0 11px;
  }
  .ftitle {
    display: flex;
    justify-content: space-between;
    height: 22px;
    margin-bottom: 14px;
    padding-right: 6px;
    font-size: 16.8px;
    line-height: 22px;
    color: #484644;
  }
  .dots {
    font-size: 16px;
    letter-spacing: 2px;
    font-weight: 400;
    color: #484644;
  }
  .fcard {
    box-sizing: border-box;
    height: 69px;
    margin-bottom: 9px;
    padding: 6px 0 0 13px;
    width: 277px;
    background: #fff;
    border: 1px solid #c8c6c4;
    border-radius: 3px;
    font-size: 16.5px;
    line-height: 27px;
    color: #484644;
  }
  .scroll {
    position: absolute;
    top: 134px;
    right: 1px;
    width: 8px;
    height: 407px;
    background: #d9d8d6;
    border-radius: 4px;
  }

  .viz {
    width: 272px;
    background: #f3f2f1;
    border-right: 1px solid #e1dfdd;
  }
  .viz .phead {
    padding: 0 11px 0 14px;
  }
  .viz h2 {
    font-size: 22.5px;
  }
  .build {
    height: 22px;
    margin-top: 13px;
    padding-left: 14px;
    font-size: 16.5px;
    font-weight: 600;
    line-height: 22px;
  }
  .tabs {
    position: relative;
    display: flex;
    align-items: flex-start;
    height: 67px;
    margin-top: 6px;
    padding-left: 14px;
    box-sizing: border-box;
    border-bottom: 1px solid #a19f9d;
  }
  .tabs::after {
    content: "";
    position: absolute;
    left: 32px;
    bottom: -7px;
    width: 13px;
    height: 13px;
    background: #f3f2f1;
    border-left: 1px solid #a19f9d;
    border-top: 1px solid #a19f9d;
    transform: rotate(45deg);
  }
  .tab {
    display: flex;
    align-items: center;
    justify-content: center;
    width: 48px;
    height: 48px;
    background: #d2d0ce;
    border-radius: 2px;
  }
  .fmt {
    margin: 5px 0 0 56px;
  }
  .vizgrid {
    display: grid;
    grid-template-columns: repeat(6, 28px);
    grid-auto-rows: 28px;
    gap: 14px;
    padding: 20px 0 16px 18px;
    border-bottom: 1px solid #e1dfdd;
  }
  .vizgrid > svg {
    display: block;
    width: 28px;
    height: 28px;
    overflow: visible;
  }
  .k {
    fill: none;
    stroke: #444;
    stroke-width: 1.3;
  }
  .kb {
    fill: none;
    stroke: #2b88d8;
    stroke-width: 1.3;
  }
  .w {
    fill: #fbfbfb;
    stroke: #444;
    stroke-width: 1.2;
  }
  .b {
    fill: #78b5e8;
    stroke: #1f6fb2;
    stroke-width: 1.3;
  }
  .g {
    fill: #b5b5b5;
    stroke: #777;
    stroke-width: 1.2;
  }
  .num {
    font-size: 11px;
    fill: #2b88d8;
    text-anchor: middle;
  }
  .lang {
    display: flex;
    align-items: center;
    justify-content: center;
    color: #1f7fc4;
    font-weight: 700;
    white-space: nowrap;
  }
  .lang .r {
    font-size: 24px;
  }
  .lang .py {
    font-size: 25px;
  }
  .lang .vdots {
    margin-top: -4px;
    font-size: 20px;
    font-weight: 400;
    color: #323130;
    letter-spacing: 4px;
  }
  .wells {
    padding: 14px 9px 0 20px;
  }
  .wlabel {
    height: 22px;
    font-size: 17px;
    line-height: 22px;
    color: #484644;
  }
  .drop {
    box-sizing: border-box;
    width: 255px;
    height: 41px;
    margin: 9px 0 17px -12px;
    padding-left: 16px;
    background: #fff;
    border: 1px dashed #c8c6c4;
    border-radius: 2px;
    font-size: 17px;
    line-height: 39px;
    white-space: nowrap;
  }
  .drill {
    height: 22px;
    font-size: 16.5px;
    font-weight: 600;
    line-height: 22px;
    color: #484644;
  }
  .trow {
    display: flex;
    align-items: center;
    justify-content: space-between;
    height: 39px;
    font-size: 17px;
    color: #484644;
  }
  .drill + .trow {
    margin-top: 8px;
  }
  .toggle {
    display: flex;
    align-items: center;
    gap: 3px;
    box-sizing: border-box;
    width: 48px;
    height: 24px;
    padding: 0 5px;
    background: #fff;
    border: 1px solid #605e5c;
    border-radius: 12px;
    font-size: 13px;
    color: #484644;
  }
  .toggle i {
    flex: none;
    width: 12px;
    height: 12px;
    background: #605e5c;
    border-radius: 50%;
  }
  .toggle.on {
    background: #605e5c;
    color: #fff;
  }
  .toggle.on i {
    background: #fff;
  }

  .fields {
    width: 271px;
    background: #f3f2f1;
  }
  .fields .phead {
    padding: 0 13px;
  }
  .fsearch {
    width: 258px;
    height: 40px;
    margin: 23px 0 0 6px;
    padding-left: 10px;
    gap: 8px;
    border-color: #8a8886;
  }
  .tree {
    margin: 15px 0 0 8px;
    width: 255px;
  }
  .trow2 {
    display: flex;
    align-items: center;
    height: 36px;
    font-size: 17px;
    color: #484644;
  }
  .trow2.hover {
    background: #ebeae8;
  }
  .tname {
    margin-top: -2px;
  }
  .tchev {
    width: 10px;
    height: 16px;
    margin: 0 9px 0 7px;
    flex: none;
  }
  .tchev path {
    fill: none;
    stroke: #484644;
    stroke-width: 1.2;
  }
  .ficon {
    width: 20px;
    height: 20px;
    margin-right: 9px;
    flex: none;
  }
  .ficon path {
    fill: none;
    stroke: #323130;
    stroke-width: 1.2;
  }
  .dots.end {
    margin-left: auto;
    margin-right: 4px;
  }
</style>
